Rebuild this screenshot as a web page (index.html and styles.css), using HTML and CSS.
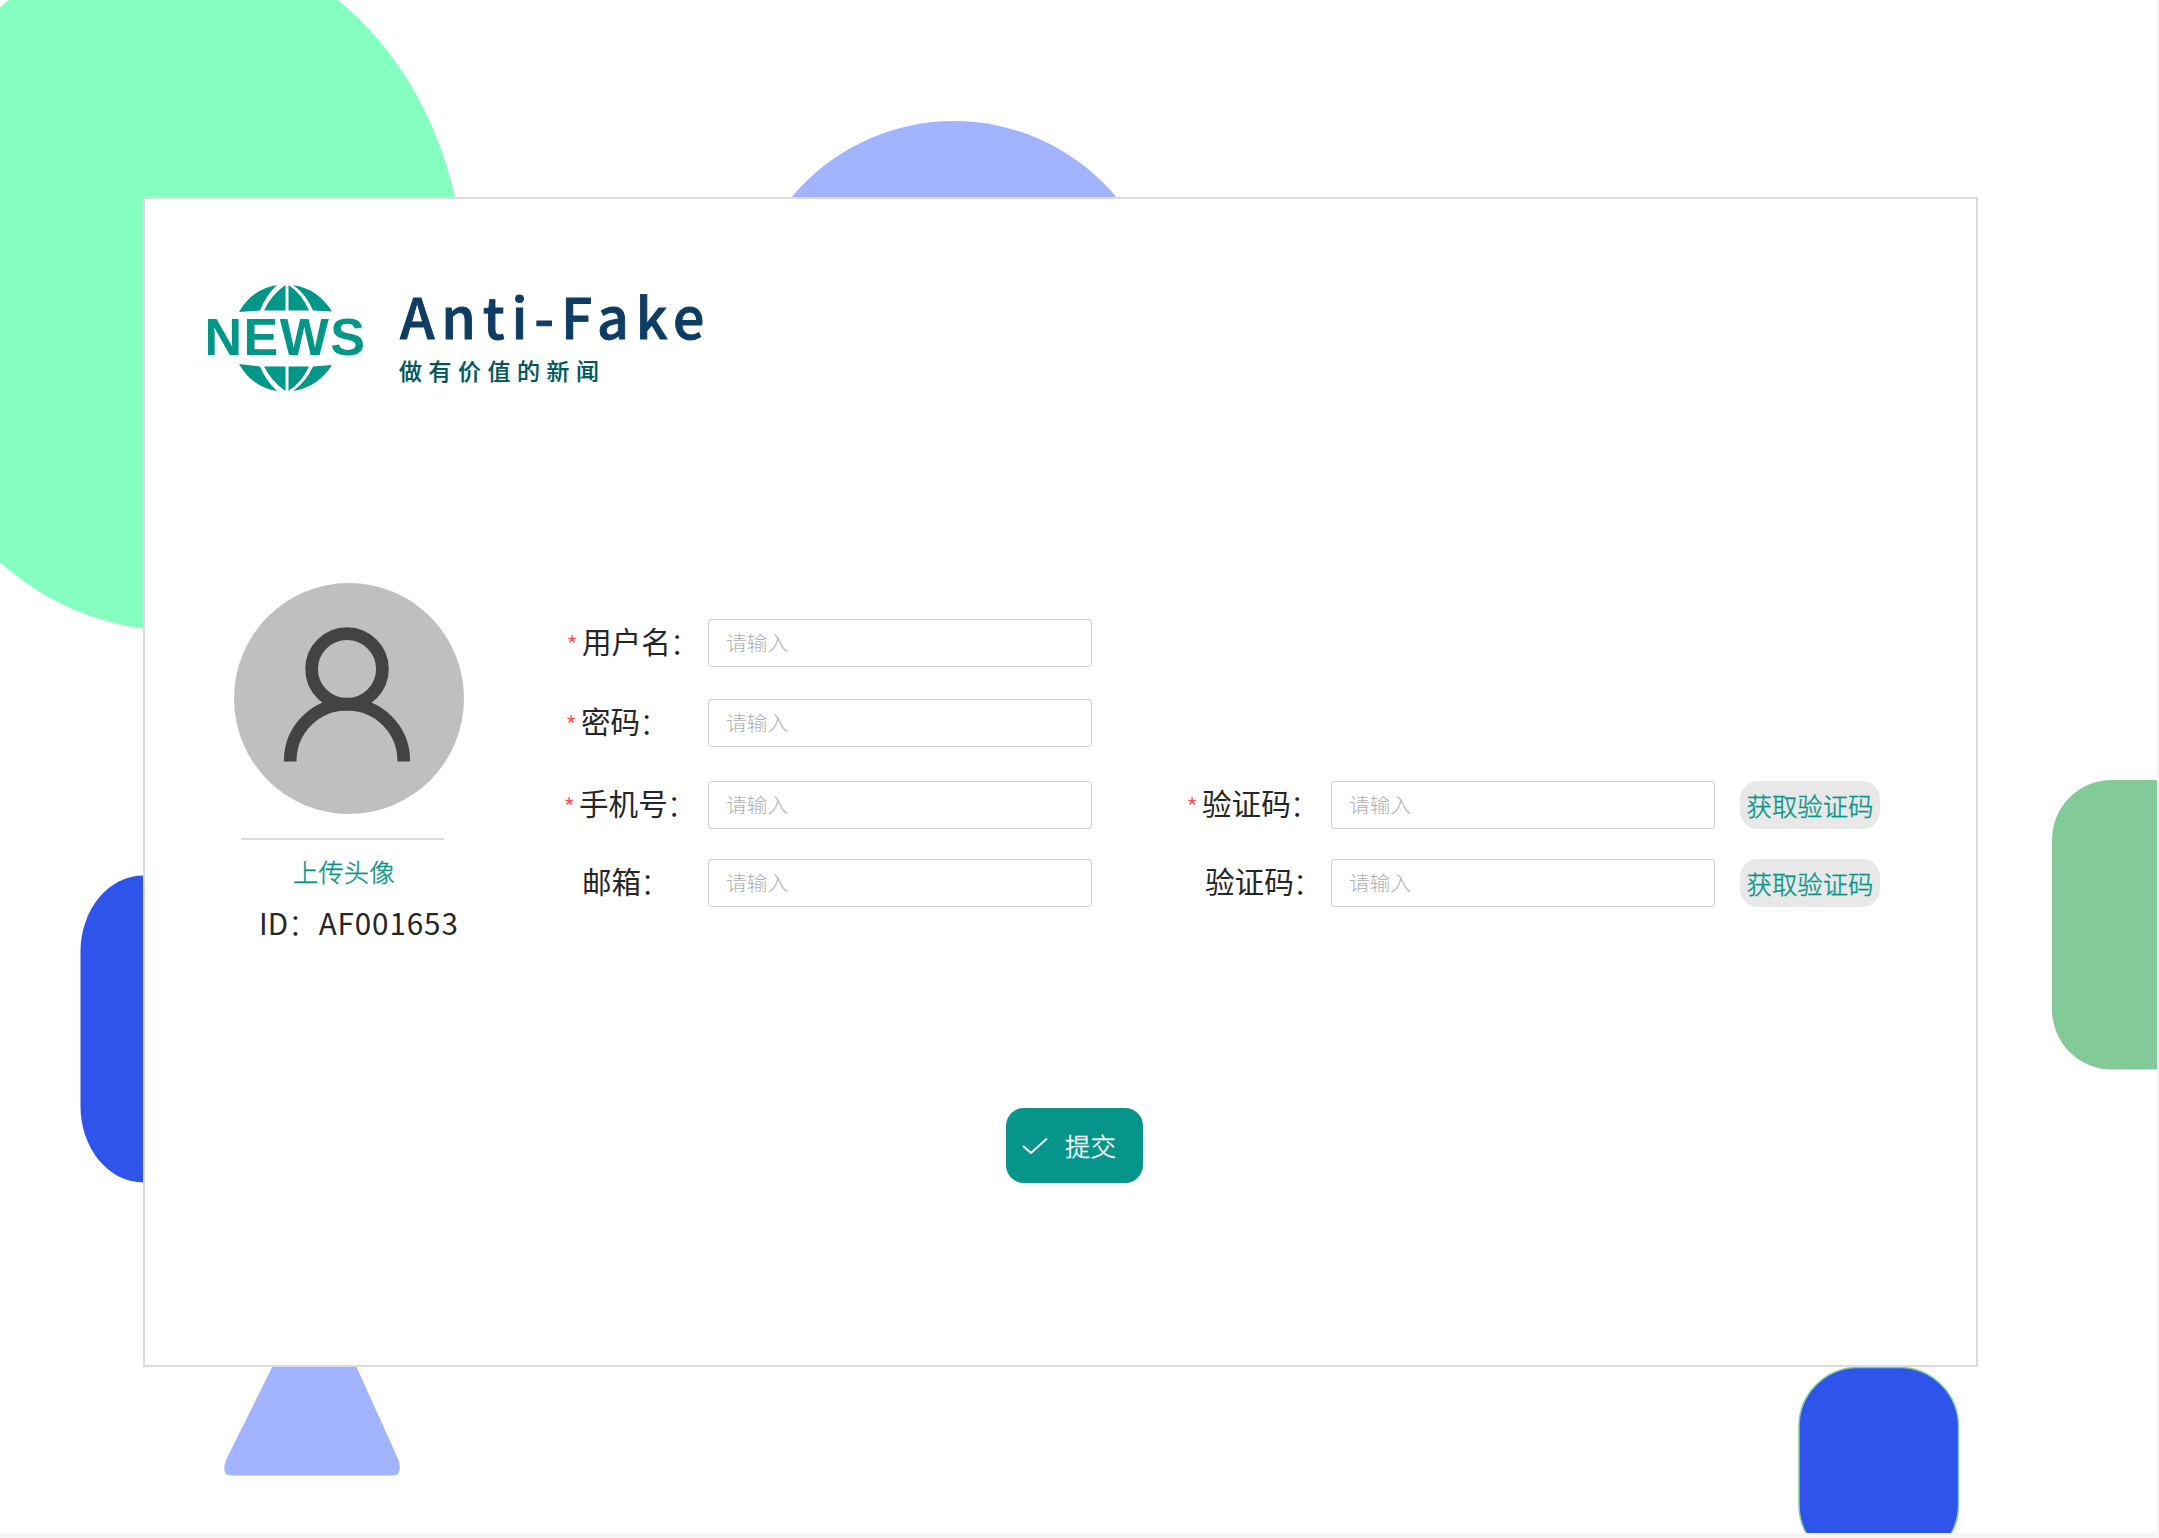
FILE: index.html
```
<!DOCTYPE html>
<html lang="zh-CN">
<head>
<meta charset="utf-8">
<title>Anti-Fake</title>
<link rel="stylesheet" href="styles.css">
</head>
<body>
<div class="page">
  <svg class="backdrop" viewBox="0 0 2157 1533" aria-hidden="true">
    <ellipse cx="173.500" cy="285" rx="291" ry="345.500" fill="#85ffbf"/>
    <ellipse cx="954" cy="338" rx="213.500" ry="217" fill="#a2b3ff"/>
    <rect x="80.500" y="875.500" width="126" height="307" rx="63" ry="76" fill="#2f54eb"/>
    <path d="M318 1275L226 1460Q221 1475 230 1475.500H394Q402 1475 399 1461L315 1275Z" fill="#a2b3ff"/>
    <rect x="2052" y="780" width="160" height="289.500" rx="60" fill="#82ca97"/>
    <rect x="1799" y="1367.500" width="159.500" height="196" rx="59" fill="#2f54eb" stroke="#82ca97" stroke-width="1.500"/>
  </svg>
  <main class="card">
    <header class="brand">
      <svg class="logo" viewBox="0 0 160 112" role="img" aria-label="NEWS">
        <g fill="#009688">
          <path d="M31 27Q44 4 69 0Q58 10 52 25.500Z"/>
          <path d="M56 25.500Q64 9 77.500 0V25.500Z"/>
          <path d="M80.500 0Q94 9 101 25.500H80.500Z"/>
          <path d="M85 0Q110 4 124 26.500L105 25.500Q98 9 85 0Z"/>
          <path d="M31 79Q44 102 69 106Q58 96 52 81.500Z"/>
          <path d="M56 81.500Q64 97 77.500 106V81.500Z"/>
          <path d="M80.500 106Q94 97 101 81.500H80.500Z"/>
          <path d="M85 106Q110 102 124 80L105 81.500Q98 97 85 106Z"/>
          <text class="logo-word" x="-3.500" y="70" textLength="160.500" lengthAdjust="spacing">NEWS</text>
        </g>
      </svg>
      <div class="brand-text">
        <h1 class="title">Anti-Fake</h1>
        <p class="slogan">做有价值的新闻</p>
      </div>
    </header>
    <form class="content">
      <aside class="profile">
        <svg class="avatar" viewBox="0 0 230 231" aria-hidden="true">
          <ellipse cx="115" cy="115.500" rx="115" ry="115.500" fill="#bfbfbf"/>
          <g fill="none" stroke="#434343" stroke-width="12.700" stroke-linejoin="round">
            <circle cx="113" cy="86" r="35.400"/>
            <path d="M56.200 178.500V178A56.800 56.800 0 0 1 169.800 178V178.500"/>
          </g>
        </svg>
        <div class="divider"></div>
        <a class="upload">上传头像</a>
        <p class="user-id">ID<b>：</b><span>AF001653</span></p>
      </aside>
      <div class="fields">
        <div class="row row-user"><label class="label shift-a"><i>*</i>用户名<b>：</b></label><input class="input" placeholder="请输入"></div>
        <div class="row row-pass"><label class="label shift-b"><i>*</i>密码<b>：</b></label><input class="input" placeholder="请输入"></div>
        <div class="row row-phone"><label class="label shift-c"><i>*</i>手机号<b>：</b></label><input class="input" placeholder="请输入"><label class="label code shift-b"><i>*</i>验证码<b>：</b></label><input class="input" placeholder="请输入"><button class="get-code" type="button">获取验证码</button></div>
        <div class="row"><label class="label shift-a"><i></i>邮箱<b>：</b></label><input class="input" placeholder="请输入"><label class="label code shift-d"><i></i>验证码<b>：</b></label><input class="input" placeholder="请输入"><button class="get-code" type="button">获取验证码</button></div>
      </div>
    </form>
    <button class="submit" type="button">
      <svg class="check" viewBox="0 0 26 18" aria-hidden="true"><path d="M1 9L9 16L25 1.500" fill="none" stroke="#fff" stroke-width="2"/></svg>
      <span>提交</span>
    </button>
  </main>
</div>
</body>
</html>
```
FILE: styles.css
```
* { box-sizing: border-box; }
body {
  margin: 0;
  width: 2159px;
  height: 1538px;
  overflow: hidden;
  background: #f5f5f5;
  font-family: "Noto Sans CJK SC", sans-serif;
  color: #262626;
}
h1, p { margin: 0; }
button, input { font-family: inherit; }
.page {
  position: relative;
  width: 2157px;
  height: 1533px;
  padding: 197px 0 0 143px;
  overflow: hidden;
  background: #fff;
}
.backdrop { position: absolute; left: 0; top: 0; width: 2157px; height: 1533px; }
.card {
  position: relative;
  width: 1835px;
  height: 1170px;
  padding-top: 86px;
  background: #fff;
  border: 2px solid #dcdcdc;
}
.brand { display: flex; height: 113px; padding-left: 63px; }
.logo { width: 160px; height: 112px; overflow: visible; }
.logo-word { font: bold 52px "Liberation Sans", sans-serif; }
.brand-text { margin-left: 31px; white-space: nowrap; }
.title {
  height: 68px;
  padding-left: 1px;
  line-height: 60px;
  color: #0f3c63;
  font-size: 55.5px;
  font-weight: 500;
  letter-spacing: 6.8px;
  -webkit-text-stroke: 0.9px #0f3c63;
}
.slogan {
  height: 36px;
  line-height: 35px;
  color: #00585c;
  font-size: 23px;
  font-weight: 500;
  letter-spacing: 6.5px;
  -webkit-text-stroke: 0.2px #00585c;
}
.content { display: flex; margin-top: 185px; height: 365px; }
.profile { width: 330px; padding-left: 89px; white-space: nowrap; }
.avatar { display: block; width: 230px; height: 231px; }
.divider { width: 203px; height: 2px; margin: 24px 0 0 7px; background: #dcdcdc; }
.upload {
  display: block;
  height: 38px;
  margin: 12px 0 0 59px;
  line-height: 38px;
  color: #06958a;
  font-size: 25.4px;
  font-weight: 300;
  -webkit-text-stroke: 0.4px #06958a;
}
.user-id { height: 40px; margin: 13px 0 0 25px; line-height: 40px; font-size: 29.6px; }
.user-id b { font-weight: 300; }
.user-id span { margin-left: 1px; letter-spacing: 0.9px; }
.fields { width: 1500px; padding-top: 36px; margin-left: 97px; }
.row { display: flex; height: 48px; }
.row-user { margin-bottom: 32px; }
.row-pass { margin-bottom: 34px; }
.row-phone { margin-bottom: 30px; }
.label {
  display: flex;
  flex: none;
  width: 147px;
  line-height: 44px;
  font-size: 29.6px;
  white-space: nowrap;
}
.label i { width: 15px; margin-left: -1px; margin-right: 1px; color: #ff4d4f; font-size: 28px; font-style: normal; font-weight: 300; line-height: 53px; }
.label b { width: 20px; margin-left: -1px; font-weight: 300; line-height: 46px; }
.shift-a { padding-left: 6px; }
.shift-b { padding-left: 5px; }
.shift-c { padding-left: 3px; }
.shift-d { padding-left: 8px; }
.code { width: 157px; margin-left: 82px; }
.code.shift-b { padding-left: 13px; }
.code.shift-d { padding-left: 16px; }
.input {
  flex: none;
  width: 384px;
  height: 48px;
  padding: 0 17px 3px;
  border: 1.5px solid #cfcfcf;
  border-radius: 3px;
  background: #fff;
  font-size: 20.8px;
  font-weight: 300;
}
.input::placeholder { color: #b0b0b0; opacity: 1; }
.get-code {
  flex: none;
  width: 140px;
  height: 48px;
  margin-left: 25px;
  padding: 0;
  border: 0;
  border-radius: 18px;
  background: #e8e8e8;
  color: #06958a;
  font-size: 25.4px;
  font-weight: 300;
  -webkit-text-stroke: 0.4px #06958a;
  white-space: nowrap;
}
.submit {
  display: flex;
  align-items: center;
  width: 137px;
  height: 75px;
  margin: 160px 0 0 861px;
  padding: 0 0 0 16px;
  border: 0;
  border-radius: 18px;
  background: #06958a;
  color: #fff;
  font-size: 25.4px;
  font-weight: 300;
  -webkit-text-stroke: 0.4px #fff;
  white-space: nowrap;
}
.submit span { padding-bottom: 2px; }
.check { width: 26px; height: 18px; margin-right: 17px; }
```
